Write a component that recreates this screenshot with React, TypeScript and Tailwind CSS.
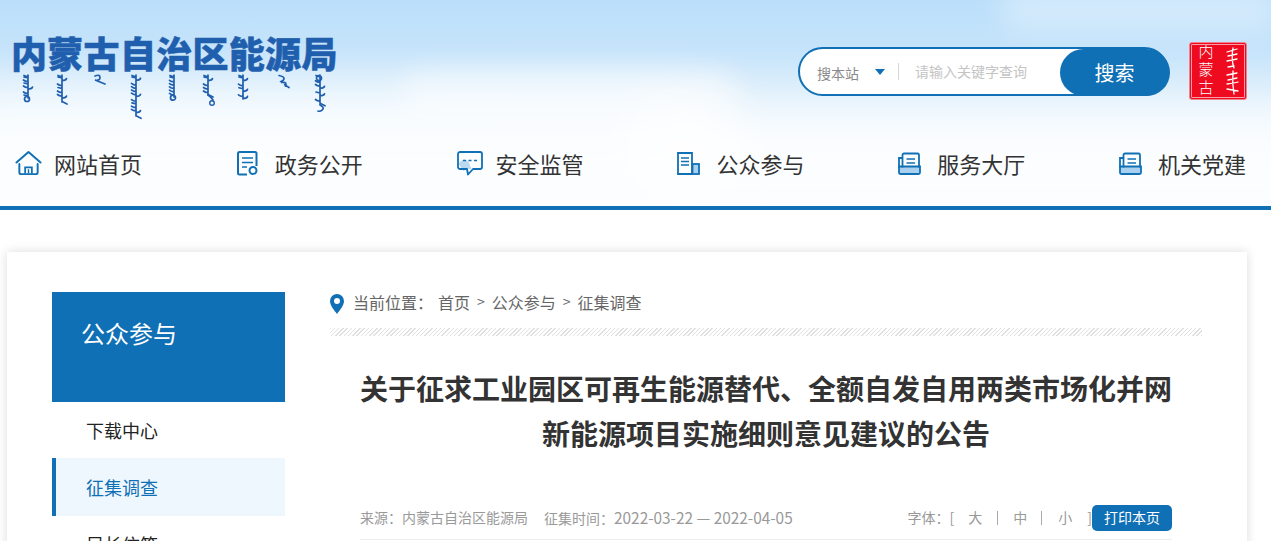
const font = "font-['Noto_Sans_CJK_SC','Noto_Sans',sans-serif]";

function HomeIcon() {
  return (
    <svg width="27" height="26" viewBox="0 0 28 26" fill="none" stroke="#1070b5" strokeWidth="2">
      <path d="M1.500 12.500 14 1.500l12.500 11" strokeLinecap="round" strokeLinejoin="round" />
      <path d="M4.500 14v8.500a2 2 0 0 0 2 2h15a2 2 0 0 0 2-2V14" strokeLinecap="round" />
      <path d="M10.500 24v-6.500h7V24" strokeWidth="1.800" />
      <path d="M14 19.500V24" strokeWidth="1.500" />
    </svg>
  );
}
function DocIcon() {
  return (
    <svg width="21" height="25" viewBox="0 0 21 25" fill="none" stroke="#1070b5" strokeWidth="2" className="ml-[1px]">
      <path d="M10 23.500H2.500a1.500 1.500 0 0 1-1.500-1.500V2.500A1.500 1.500 0 0 1 2.500 1h15.500a1.500 1.500 0 0 1 1.500 1.500V15" />
      <path d="M5 7h11M5 11.500h11M5 16h5" strokeWidth="1.600" />
      <circle cx="16" cy="19.500" r="3.500" />
    </svg>
  );
}
function ChatIcon() {
  return (
    <svg width="26" height="25" viewBox="0 0 26 25" fill="none">
      <path d="M1.500 13c2-4 7-6 10-2l3 7H9.500L6.500 20z" fill="#bcd9f0" />
      <path d="M3 1h20a2 2 0 0 1 2 2v13a2 2 0 0 1-2 2h-7l-5 5.500-1-5.500H3a2 2 0 0 1-2-2V3a2 2 0 0 1 2-2z" stroke="#1070b5" strokeWidth="1.800" strokeLinejoin="round" />
      <path d="M6 9.500h3M11.500 9.500h3M17 9.500h3" stroke="#1070b5" strokeWidth="1.600" />
    </svg>
  );
}
function PaperIcon() {
  return (
    <svg width="23" height="23" viewBox="0 0 23 23" fill="none" stroke="#1070b5" strokeWidth="1.800">
      <path d="M15 22H1V1h14z" />
      <path d="M4 6h8M4 9.500h8M4 13h8" strokeWidth="1.500" />
      <rect x="15.500" y="12" width="6.500" height="10" fill="#a9d0ee" />
    </svg>
  );
}
function BookIcon() {
  return (
    <svg width="23" height="23" viewBox="0 0 23 22" fill="none" stroke="#1070b5" strokeWidth="1.800">
      <path d="M1 14h21v6a1.500 1.500 0 0 1-1.500 1.500h-18A1.500 1.500 0 0 1 1 20z" fill="#a9d0ee" />
      <path d="M1 15V5.500h3" />
      <path d="M4.500 15V2.500A1.500 1.500 0 0 1 6 1h13.500A1.500 1.500 0 0 1 21 2.500V15" />
      <path d="M8.500 6.500h8.500M8.500 10.500h8.500" strokeWidth="1.700" />
    </svg>
  );
}

const marks = [
  { x: 28, h: 24, s: "lblbrblo" },
  { x: 62, h: 28, s: "lrblbbrt" },
  { x: 136, h: 42, s: "lrbbbbrblbbrt" },
  { x: 174, h: 23, s: "lbbbbbo" },
  { x: 208, h: 21, s: "lrbbbt" },
  { x: 243, h: 25, s: "lrblrbr" },
  { x: 320, h: 30, s: "obbrlrbt" },
];

function Mongolian() {
  return (
    <svg width="340" height="46" viewBox="0 0 340 46" fill="none" stroke="#1f5fae" strokeWidth="1.700" strokeLinecap="round" className="-ml-[11px] -mt-[1px]">
      {marks.map((m) => {
        const step = m.h / m.s.length;
        let d = `M${m.x} 1V${m.h}M${m.x - 4} 1.500l4 1.500`;
        m.s.split("").forEach((c, i) => {
          const y = 3 + i * step;
          if (c === "b") d += `M${m.x - 4.500} ${y}q3 2.500 4.500 .5`;
          if (c === "l") d += `M${m.x - 4} ${y}l4 1`;
          if (c === "r") d += `M${m.x} ${y}q4 0 4.500 -2`;
          if (c === "t") d += `M${m.x} ${y}l5 2.500`;
          if (c === "o") d += `M${m.x - 3.500} ${y + 1}a2.500 2.500 0 1 0 5 0a2.500 2.500 0 1 0 -5 0`;
        });
        return <path key={m.x} d={d} />;
      })}
      <path d="M95 2q5-2 5 1.500t-5 2.500l10 4" />
      <path d="M279 1.500q5 1 5 3t-3 3l1 1q4-1 4 2t-1 .5l4 2.500" />
      <path d="M208 21q3 2 5 5" />
      <circle cx="212" cy="29" r="2.300" strokeWidth="1.400" />
      <path d="M320 31q4 2 3 4q-2 3-5 2" />
    </svg>
  );
}

const nav: [string, () => React.ReactElement][] = [
  ["网站首页", HomeIcon],
  ["政务公开", DocIcon],
  ["安全监管", ChatIcon],
  ["公众参与", PaperIcon],
  ["服务大厅", BookIcon],
  ["机关党建", BookIcon],
];

export default function App() {
  return (
    <div className={`${font} w-[1271px] h-[541px] overflow-hidden bg-white`}>
      <header className="relative h-[210px] border-b-4 border-[#1070b5] overflow-hidden bg-[linear-gradient(180deg,#bbdffa_0%,#c6e4fb_25%,#dceefb_45%,#f0f8fe_66%,#fbfdff_100%)]">
        <div className="absolute left-[-60px] top-[88px] w-[800px] h-[110px] rounded-full bg-white/70 blur-[24px]" />
        <div className="absolute left-[400px] top-[70px] w-[340px] h-[50px] rounded-full bg-white/45 blur-[14px]" />
        <div className="absolute left-[620px] top-[105px] w-[720px] h-[100px] rounded-full bg-white/65 blur-[24px]" />
        <div className="absolute left-[1000px] top-[-14px] w-[280px] h-[44px] rounded-full bg-white/35 blur-[14px]" />
        <div className="relative flex flex-col h-full">
          <div className="flex items-start justify-between h-[135px] pl-[11px] pr-[24px]">
            <div className="pt-[29px]">
              <div className="text-[36px] leading-[46px] font-black text-[#1f5fae] tracking-[0.3px] [-webkit-text-stroke:0.5px_#1f5fae] whitespace-nowrap">内蒙古自治区能源局</div>
              <Mongolian />
            </div>
            <div className="flex items-start gap-[20px] pt-[42px]">
              <div className="mt-[5px] w-[372px] pl-[1px] h-[49px] flex">
                <div className="w-full h-full border-[2.500px] border-[#1070b5] rounded-full bg-white flex items-center">
                  <span className="ml-[17px] w-[58px] text-[14px] leading-[20px] text-[#8a8a8a] mt-[2px] whitespace-nowrap">搜本站</span>
                  <span className="w-0 h-0 border-x-[5px] border-x-transparent border-t-[6px] border-t-[#1070b5]" />
                  <span className="ml-[13px] w-px h-[17px] bg-[#d5d5d5]" />
                  <span className="ml-[16px] flex-1 text-[14px] text-[#c4c4c4] whitespace-nowrap">请输入关键字查询</span>
                  <span className="w-[110px] h-[47px] rounded-full bg-[#1070b5] text-white text-[20px] flex items-center justify-center -mr-[2.500px] mt-[2px]">搜索</span>
                </div>
              </div>
              <div className="w-[58px] h-[58px] rounded-[3px] bg-[#ee0a1f] border border-[#f27f8c] outline outline-1 -outline-offset-[3px] outline-[#f7a0aa] flex items-center justify-center gap-[9px]">
                <div className="[writing-mode:vertical-rl] text-white text-[15px] leading-[18px] tracking-[3px] font-light">内蒙古</div>
                <svg width="16" height="50" viewBox="0 0 16 50" fill="none" stroke="#fff" strokeWidth="1.300" strokeLinecap="round">
                  <path d="M9 2q-2 12 1 20M3 6l10-3M4 10l9-2M3 15l10-2M10 20l-6 1" />
                  <path d="M9 25q-1 12 1 23M3 29l10-2M4 34l9-2M3 38q8-1 11-2M3 43l11 2" />
                </svg>
              </div>
            </div>
          </div>
          <nav className="flex justify-between items-center h-[56px] pl-[15px] pr-[25px]">
            {nav.map(([t, I]) => (
              <div key={t} className="flex items-center">
                <span className="w-[39px] flex items-center"><I /></span>
                <span className="text-[22px] leading-[30px] text-[#333] whitespace-nowrap">{t}</span>
              </div>
            ))}
          </nav>
        </div>
      </header>
      <main className="pt-[42px] pl-[7px]">
        <div className="w-[1240px] h-[600px] bg-white shadow-[0_0_10px_rgba(0,0,0,0.14)] flex pt-[40px] pl-[45px] gap-[45px]">
          <aside className="w-[233px] shrink-0">
            <div className="h-[110px] bg-[#1070b5] text-white text-[24px] leading-[34px] pl-[29px] pt-[24px]">公众参与</div>
            <div className="h-[56px] pl-[34px] flex items-center text-[18px] text-[#222]">下载中心</div>
            <div className="h-[58px] pl-[30px] flex items-center text-[18px] text-[#1070b5] bg-[#eff7fe] border-l-4 border-[#1070b5]">征集调查</div>
            <div className="h-[56px] pl-[34px] flex items-center text-[18px] text-[#222]">局长信箱</div>
          </aside>
          <section className="w-[872px]">
            <div className="flex items-center h-[24px] -mt-[1px] text-[16px] text-[#666] whitespace-nowrap">
              <svg width="14" height="20" viewBox="0 0 14 20" className="mr-[9px] mt-[1px]">
                <path fillRule="evenodd" fill="#1070b5" d="M7 0a7 7 0 0 1 7 7c0 4.500-4.500 9.500-7 13C4.500 16.500 0 11.500 0 7a7 7 0 0 1 7-7zm0 4a3 3 0 1 0 0 6 3 3 0 0 0 0-6z" />
              </svg>
              <span className="w-[85px] -mt-[3px]">当前位置：</span>
              <span className="-mt-[3px]">首页</span>
              <span className="mx-[7px] text-[14px] -mt-[3px]">&gt;</span>
              <span className="-mt-[3px]">公众参与</span>
              <span className="mx-[7px] text-[14px] -mt-[3px]">&gt;</span>
              <span className="-mt-[3px]">征集调查</span>
            </div>
            <div className="mt-[13px] h-[8px] bg-[repeating-linear-gradient(135deg,#e0e0e0_0,#e0e0e0_1px,#fff_1px,#fff_3px)]" />
            <h1 className="mt-[30px] text-center text-[28px] leading-[45px] font-bold text-[#333]">
              <div className="whitespace-nowrap">关于征求工业园区可再生能源替代、全额自发自用两类市场化并网</div>
              <div className="whitespace-nowrap">新能源项目实施细则意见建议的公告</div>
            </h1>
            <div className="mt-[49px] ml-[30px] w-[812px] h-[35px] pb-[9px] border-b border-[#eee] flex items-center justify-between text-[#999] text-[14px] whitespace-nowrap">
              <div className="flex items-center">
                <span>来源：内蒙古自治区能源局</span>
                <span className="ml-[16px]">征集时间：<span className="text-[15.400px]">2022-03-22 — 2022-04-05</span></span>
              </div>
              <div className="flex items-center">
                <span>字体：[</span>
                <span className="ml-[14px]">大</span>
                <span className="ml-[15px] w-px h-[14px] bg-[#aaa]" />
                <span className="ml-[15px]">中</span>
                <span className="ml-[14px] w-px h-[14px] bg-[#aaa]" />
                <span className="ml-[16px]">小</span>
                <span className="ml-[15px]">]</span>
                <span className="w-[80px] h-[26px] rounded-[5px] bg-[#1070b5] text-white text-[14px] flex items-center justify-center">打印本页</span>
              </div>
            </div>
          </section>
        </div>
      </main>
    </div>
  );
}
